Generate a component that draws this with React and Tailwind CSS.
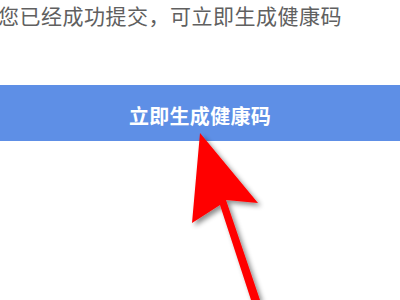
export default function App() {
  return (
    <div className="relative w-[400px] h-[300px] overflow-hidden bg-white font-['Noto_Sans_CJK_SC',sans-serif]">
      <p className="ml-[-2px] pt-[1px] text-[21px] leading-[28px] text-[#606060] whitespace-nowrap tracking-[0.5px]">
        您已经成功提交，可立即生成健康码
      </p>
      <div className="mt-[56px] h-[56px] bg-[#5e8fe6] flex items-center justify-center">
        <span className="pt-[6px] text-[20px] font-semibold text-white tracking-[0.3px]">立即生成健康码</span>
      </div>

      {/* red arrow annotation */}
      <svg className="absolute left-0 top-0" width="400" height="300" viewBox="0 0 400 300">
        <defs>
          <filter id="sh" x="-30%" y="-30%" width="160%" height="160%">
            <feDropShadow dx="3" dy="3" stdDeviation="2.5" floodColor="#000" floodOpacity="0.45" />
          </filter>
        </defs>
        <polygon
          points="200,133 258,203 226,200 260,300 251,300 220,205 192,223"
          fill="#ff0000"
          filter="url(#sh)"
        />
      </svg>
    </div>
  );
}
